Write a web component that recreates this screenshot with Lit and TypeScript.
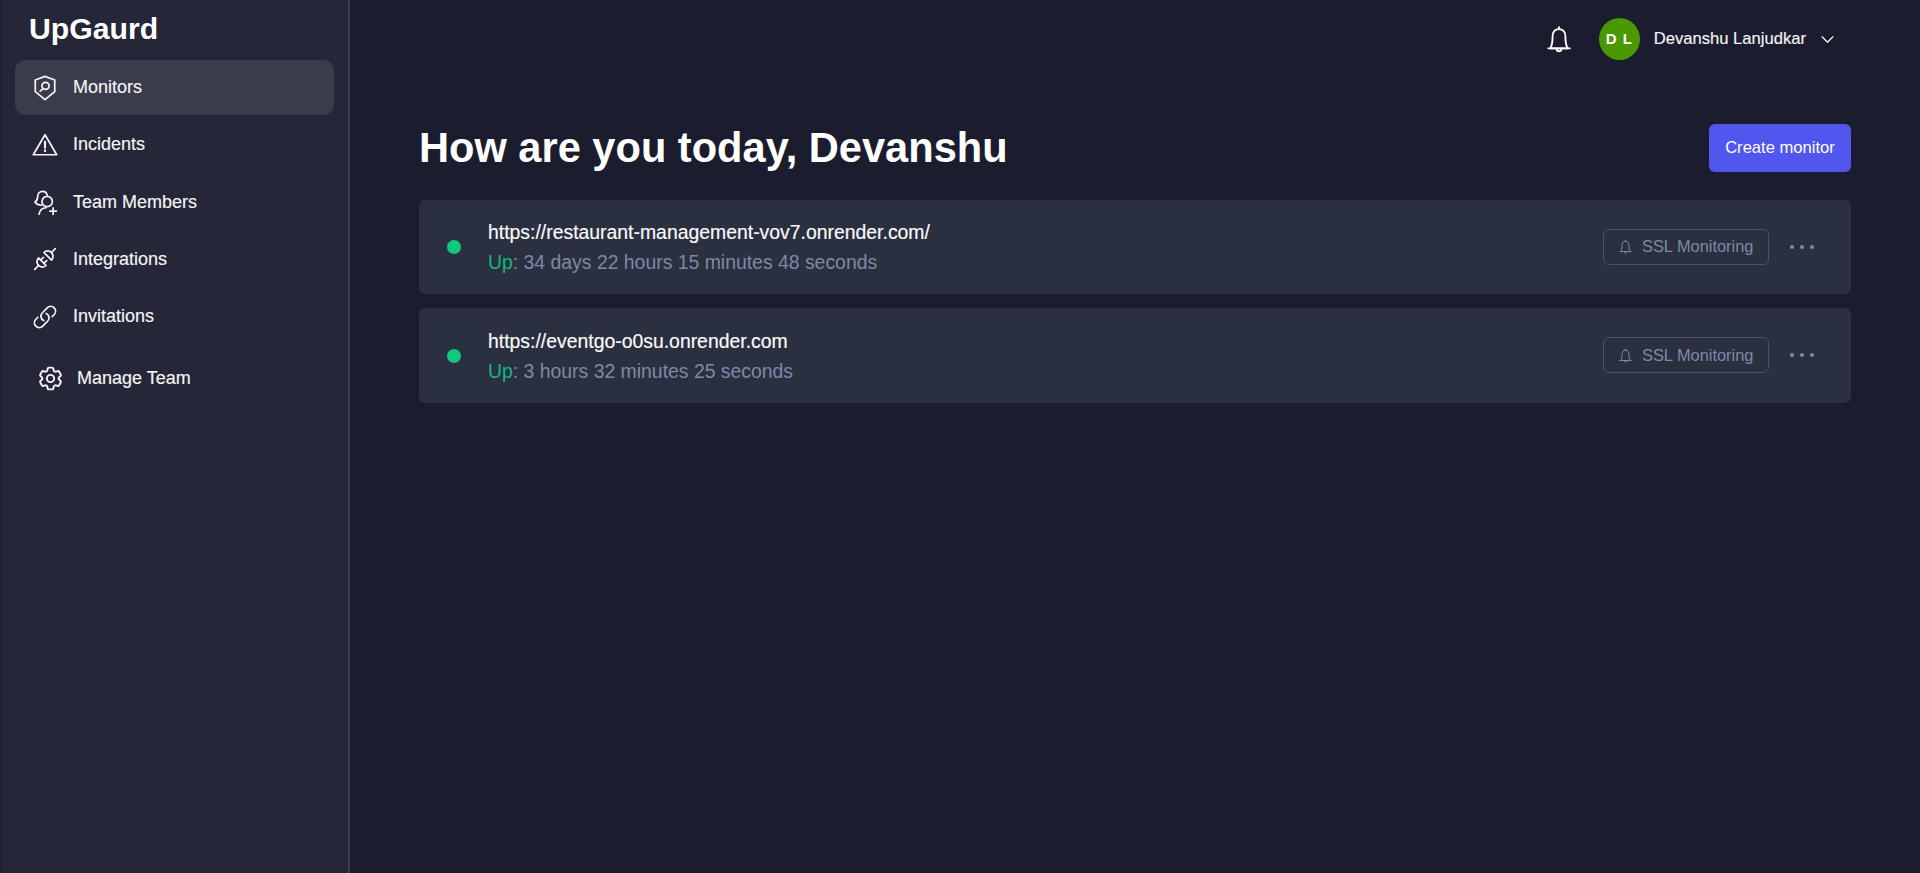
import { css, html, LitElement, svg } from "lit";
import { customElement } from "lit/decorators.js";

const icons = {
  shield: svg`<path d="M12 1.300 21 4.600V15.300L12 22.800 3 15.300V4.600Z"/><circle cx="12.500" cy="10" r="3.300"/><path d="M10 12.500 7.500 15"/>`,
  alert: svg`<path d="M12 2.500 22.800 21H1.200Z"/><path d="M12 9V14.500" stroke-width="2"/><path d="M12 17V17.800" stroke-width="2"/>`,
  team: svg`<path d="M9 15C6.800 14.800 3.800 13.800 2.800 12 4.500 11 5.200 9 5.200 7.200 5.200 4.200 7.200 2.200 9.700 2.200 11.800 2.200 13.500 3.400 14 5.500"/><circle cx="14" cy="11.500" r="4.800"/><path d="M6.500 23.500C7 20 9.500 17.500 13 17.300"/><path d="M19.500 17.500V23.500M16.500 20.500H22.500"/>`,
  plug: svg`<path d="M6 11A4.950 4.950 0 0 0 13 18Z"/><path d="M11 6A4.950 4.950 0 0 1 18 13Z"/><path d="M6 18 2.500 21.500M18 6 21.500 2.500M8 13 10.500 10.500M11 16 13.500 13.500"/>`,
  link: svg`<path d="M13.190 8.688a4.500 4.500 0 0 1 1.242 7.244l-4.500 4.500a4.500 4.500 0 0 1-6.364-6.364l1.757-1.757m13.350-.622 1.757-1.757a4.500 4.500 0 0 0-6.364-6.364l-4.500 4.500a4.500 4.500 0 0 0 1.242 7.244"/>`,
  cog: svg`<path d="M9.594 3.940c.09-.542.56-.94 1.110-.94h2.593c.55 0 1.020.398 1.110.94l.213 1.281c.063.374.313.686.645.870.074.04.147.083.22.127.325.196.72.257 1.075.124l1.217-.456a1.125 1.125 0 0 1 1.370.49l1.296 2.247a1.125 1.125 0 0 1-.26 1.431l-1.003.827c-.293.241-.438.613-.43.992a7.723 7.723 0 0 1 0 .255c-.008.378.137.75.43.991l1.004.827c.424.35.534.955.26 1.430l-1.298 2.247a1.125 1.125 0 0 1-1.369.491l-1.217-.456c-.355-.133-.75-.072-1.076.124a6.470 6.470 0 0 1-.22.128c-.331.183-.581.495-.644.869l-.213 1.281c-.09.543-.56.94-1.110.94h-2.594c-.55 0-1.019-.398-1.110-.94l-.213-1.281c-.062-.374-.312-.686-.644-.87a6.520 6.520 0 0 1-.22-.127c-.325-.196-.72-.257-1.076-.124l-1.217.456a1.125 1.125 0 0 1-1.369-.49l-1.297-2.247a1.125 1.125 0 0 1 .26-1.431l1.004-.827c.292-.24.437-.613.43-.991a6.932 6.932 0 0 1 0-.255c.007-.38-.138-.751-.43-.992l-1.004-.827a1.125 1.125 0 0 1-.26-1.430l1.297-2.247a1.125 1.125 0 0 1 1.370-.491l1.216.456c.356.133.751.072 1.076-.124.072-.044.146-.086.22-.128.332-.183.582-.495.644-.869l.214-1.280Z"/><circle cx="12" cy="12" r="3"/>`,
  bell: svg`<path d="M12 1.800V3.500M12 3.500C8.500 3.500 6.500 6 6.500 10 6.500 14.500 5.800 18 4.500 20H19.500C18.200 18 17.500 14.500 17.500 10 17.500 6 15.500 3.500 12 3.500Z"/><path d="M2.800 20H21.200"/><path d="M10 20.500a2 2 0 0 0 4 0"/>`,
  chevron: svg`<path d="M2 7 12 17 22 7"/>`,
};

const nav = [
  { label: "Monitors", icon: icons.shield, active: true },
  { label: "Incidents", icon: icons.alert },
  { label: "Team Members", icon: icons.team },
  { label: "Integrations", icon: icons.plug },
  { label: "Invitations", icon: icons.link },
];

const monitors = [
  { url: "https://restaurant-management-vov7.onrender.com/", uptime: "34 days 22 hours 15 minutes 48 seconds" },
  { url: "https://eventgo-o0su.onrender.com", uptime: "3 hours 32 minutes 25 seconds" },
];

const icon = (content: unknown, cls = "") =>
  html`<svg class="icon ${cls}" viewBox="0 0 24 24" fill="none" stroke="currentColor" stroke-width="1.6" stroke-linecap="round" stroke-linejoin="round">${content}</svg>`;

@customElement("app-root")
class AppRoot extends LitElement {
  static styles = css`
    :host {
      display: flex;
      height: 873px;
      overflow: hidden;
      background-color: #1b1d2e;
      color: #fff;
      font-family: "Liberation Sans", Arial, sans-serif;
    }

    .sidebar {
      box-sizing: border-box;
      width: 349px;
      flex: none;
      padding-left: 15px;
      padding-right: 13px;
      margin-left: 1px;
      background-color: #252638;
      border-right: 2px solid #3a3d50;
    }

    .logo {
      margin: 0;
      padding: 11px 0 0 13px;
      height: 60px;
      box-sizing: border-box;
      font-size: 30.200px;
      line-height: 36px;
      font-weight: bold;
    }

    .nav {
      display: flex;
      flex-direction: column;
      gap: 2.300px;
      width: 319px;
      margin-left: -1px;
    }

    .nav-item {
      display: flex;
      align-items: center;
      gap: 17px;
      height: 55px;
      padding-left: 19px;
      border-radius: 10px;
      font-size: 18px;
      color: #f4f4f6;
      -webkit-text-stroke: 0.150px #f4f4f6;
    }

    .nav-item.active {
      background-color: #3a3c4c;
    }

    .nav-item .icon {
      width: 26px;
      height: 26px;
      margin-left: -2px;
      margin-right: -2px;
    }

    .nav-item.manage {
      gap: 16px;
      margin-top: 5px;
      padding-left: 24px;
    }

    .nav-item.manage .icon {
      width: 29px;
      height: 29px;
      margin-left: -3.500px;
      margin-right: -3.500px;
    }

    .main {
      flex: 1;
      min-width: 0;
      padding: 0 69px;
    }

    .topbar {
      display: flex;
      align-items: center;
      justify-content: flex-end;
      height: 78px;
      padding-right: 17px;
    }

    .bell {
      width: 28px;
      height: 28px;
      margin-right: 26px;
    }

    .avatar {
      display: flex;
      align-items: center;
      justify-content: center;
      box-sizing: border-box;
      width: 41px;
      height: 42px;
      padding-bottom: 2px;
      border-radius: 50%;
      background-color: #4b9900;
      font-size: 15px;
      font-weight: bold;
      letter-spacing: 1px;
    }

    .user {
      margin-left: 14px;
      font-size: 16.600px;
      color: #f4f4f6;
      -webkit-text-stroke: 0.150px #f4f4f6;
    }

    .chevron {
      width: 13px;
      height: 13px;
      margin-left: 15px;
      stroke-width: 2.200;
    }

    .header {
      display: flex;
      align-items: center;
      justify-content: space-between;
      margin-top: 46px;
      height: 48px;
    }

    h1 {
      margin: 0;
      font-size: 41.600px;
      font-weight: bold;
    }

    .create {
      box-sizing: border-box;
      width: 142px;
      height: 48px;
      border: 0;
      border-radius: 6px;
      background-color: #5156ef;
      color: #fff;
      font: 16.600px "Liberation Sans", Arial, sans-serif;
    }

    .list {
      display: flex;
      flex-direction: column;
      gap: 14px;
      margin-top: 28px;
    }

    .card {
      display: flex;
      align-items: center;
      height: 94.400px;
      padding: 0 33px 0 28px;
      border-radius: 6px;
      background-color: #2a3040;
    }

    .dot {
      flex: none;
      width: 14px;
      height: 14px;
      border-radius: 50%;
      background-color: #10c97e;
      margin-right: 27px;
    }

    .info {
      flex: 1;
      min-width: 0;
    }

    .url {
      font-size: 19.400px;
      line-height: 24px;
      color: #fbfbfc;
      -webkit-text-stroke: 0.150px #fbfbfc;
    }

    .uptime {
      margin-top: 6px;
      font-size: 19.400px;
      line-height: 24px;
      color: #8088a5;
    }

    .up {
      color: #10b981;
    }

    .ssl {
      display: flex;
      align-items: center;
      box-sizing: border-box;
      width: 166px;
      height: 36px;
      margin-top: -1px;
      padding-left: 14px;
      gap: 9px;
      border: 1px solid #4b5366;
      border-radius: 6px;
      font-size: 16.400px;
      color: #8088a5;
    }

    .ssl .icon {
      width: 15px;
      height: 15px;
    }

    .more {
      display: flex;
      gap: 6px;
      margin-top: -1px;
      margin-left: 21px;
      margin-right: 4px;
    }

    .more span {
      width: 4px;
      height: 4px;
      border-radius: 50%;
      background-color: #8088a5;
    }
  `;

  render() {
    return html`
      <aside class="sidebar">
        <h2 class="logo">UpGaurd</h2>
        <nav class="nav">
          ${nav.map(
            (item) => html`<div class="nav-item ${item.active ? "active" : ""}">${icon(item.icon)}<span>${item.label}</span></div>`
          )}
          <div class="nav-item manage">${icon(icons.cog)}<span>Manage Team</span></div>
        </nav>
      </aside>
      <main class="main">
        <div class="topbar">
          ${icon(icons.bell, "bell")}
          <div class="avatar">D L</div>
          <span class="user">Devanshu Lanjudkar</span>
          ${icon(icons.chevron, "chevron")}
        </div>
        <div class="header">
          <h1>How are you today, Devanshu</h1>
          <button class="create">Create monitor</button>
        </div>
        <div class="list">
          ${monitors.map(
            (m) => html`<div class="card">
              <span class="dot"></span>
              <div class="info">
                <div class="url">${m.url}</div>
                <div class="uptime"><span class="up">Up</span>: ${m.uptime}</div>
              </div>
              <div class="ssl">${icon(icons.bell)}<span>SSL Monitoring</span></div>
              <div class="more"><span></span><span></span><span></span></div>
            </div>`
          )}
        </div>
      </main>
    `;
  }
}

declare global {
  interface HTMLElementTagNameMap {
    "app-root": AppRoot;
  }
}
